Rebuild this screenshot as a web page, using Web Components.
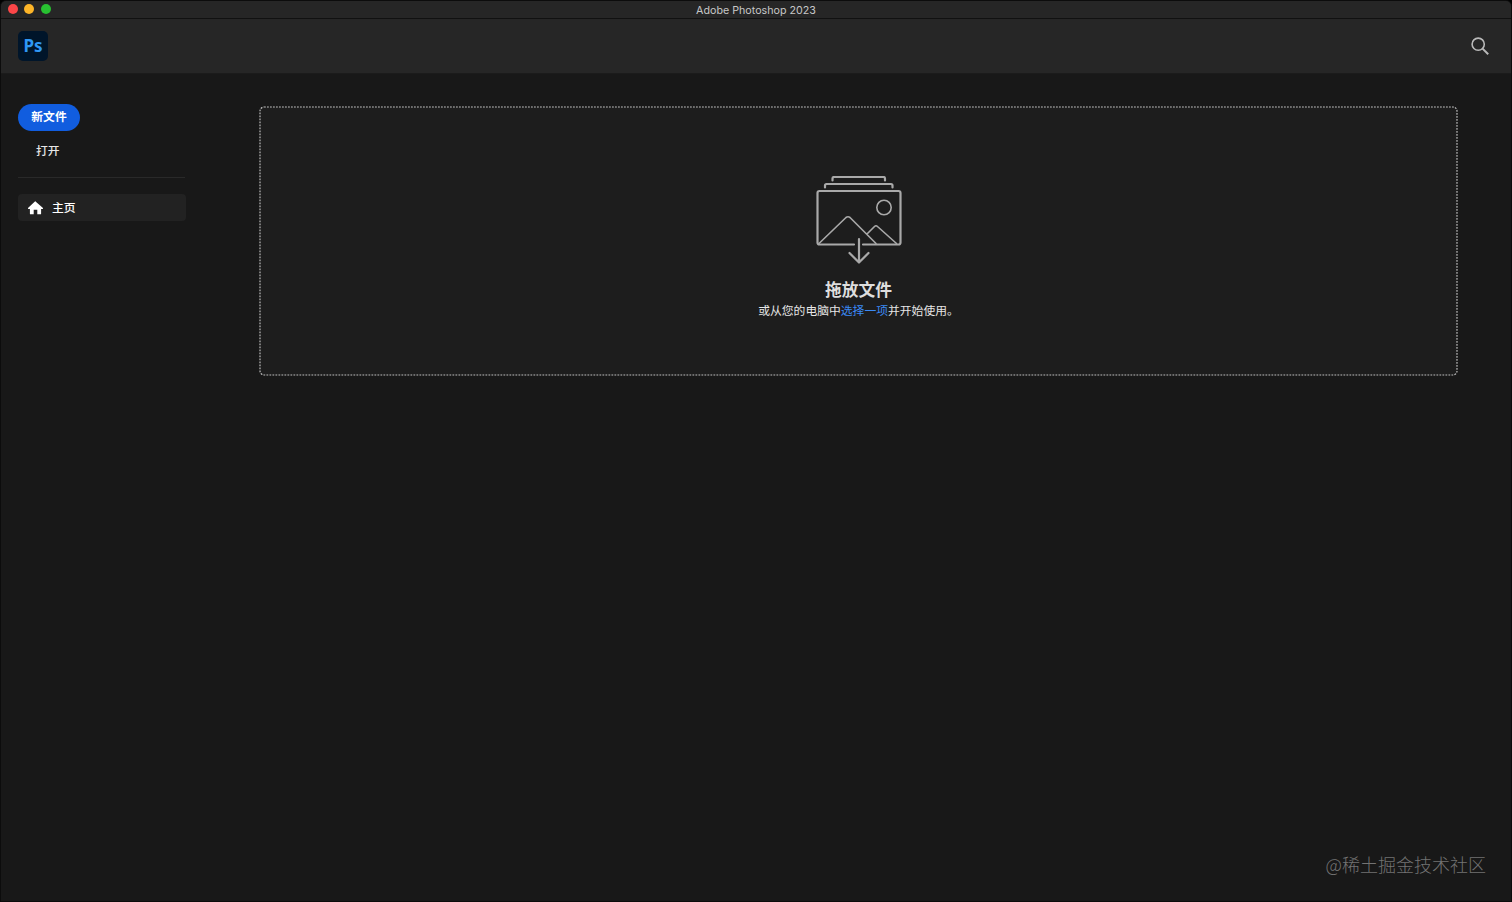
<!DOCTYPE html>
<html lang="zh-CN">
<head>
<meta charset="utf-8">
<title>Adobe Photoshop 2023</title>
<style>
    html, body {
        margin: 0;
        height: 100%;
        overflow: hidden;
        background: #000;
    }
</style>
</head>
<body>
<ps-window>
    <ps-titlebar slot="title">Adobe Photoshop 2023</ps-titlebar>
    <ps-header slot="header"></ps-header>
    <ps-sidebar slot="side"></ps-sidebar>
    <ps-dropzone></ps-dropzone>
    <ps-watermark slot="mark">@稀土掘金技术社区</ps-watermark>
</ps-window>

<script>
    const define = (name, markup) => {
        customElements.define(name, class extends HTMLElement {
            constructor() {
                super();
                this.attachShadow({ mode: 'open' }).innerHTML = markup;
            }
        });
    };

    define('ps-window', `
        <style>
            :host {
                display: flex;
                flex-direction: column;
                box-sizing: border-box;
                height: 100vh;
                border: 1px solid #0c0c0c;
                border-radius: 6px 6px 0 0;
                overflow: hidden;
                background: #181818;
                color: #e6e6e6;
                font-family: Inter, "Noto Sans CJK SC", sans-serif;
            }
            .body {
                flex: 1;
                display: flex;
                align-items: flex-start;
            }
            .main {
                flex: 1;
                padding: 32px 53px 0 73px;
            }
        </style>
        <slot name="title"></slot>
        <slot name="header"></slot>
        <div class="body">
            <slot name="side"></slot>
            <div class="main"><slot></slot></div>
        </div>
        <slot name="mark"></slot>
    `);

    define('ps-titlebar', `
        <style>
            :host {
                display: grid;
                grid-template-columns: 1fr auto 1fr;
                height: 17px;
                border-bottom: 1px solid #111;
                background: #262626;
                color: #c6c6c6;
                font-size: 10.7px;
                line-height: 17px;
            }
            .lights {
                display: flex;
                gap: 6.8px;
                padding: 3.4px 0 0 6.6px;
            }
            i {
                width: 10px;
                height: 10px;
                border-radius: 50%;
            }
            .title { padding-top: 1px; }
        </style>
        <div class="lights">
            <i style="background:#fc4648"></i>
            <i style="background:#fdb528"></i>
            <i style="background:#28c131"></i>
        </div>
        <div class="title"><slot></slot></div>
    `);

    define('ps-header', `
        <style>
            :host {
                display: flex;
                align-items: center;
                justify-content: space-between;
                height: 54px;
                padding: 0 22.5px 0 17px;
                background: #262626;
                border-bottom: 1px solid #1b1b1b;
            }
            .logo {
                width: 30px;
                height: 30px;
                border-radius: 5px;
                background: #00152a;
                color: #2f97f5;
                text-align: center;
                font: 700 17px/29px "Noto Sans", sans-serif;
            }
            svg { display: block; }
        </style>
        <div class="logo">Ps</div>
        <svg width="18" height="18" viewBox="0 0 18 18" fill="none" stroke="#b9b9b9" stroke-width="1.6">
            <circle cx="7.200" cy="7.200" r="6.100"/>
            <path d="M11.600 11.600 17.200 17.200" stroke-width="2"/>
        </svg>
    `);

    define('ps-sidebar', `
        <style>
            :host {
                display: block;
                box-sizing: border-box;
                width: 185px;
                padding: 30px 0 0 17px;
                font-size: 11.8px;
            }
            .new {
                width: 62px;
                height: 27px;
                border-radius: 14px;
                background: #115ddf;
                color: #fff;
                text-align: center;
                font-weight: 700;
                line-height: 27px;
            }
            .open {
                margin-top: 7px;
                padding-left: 18px;
                font-weight: 500;
                line-height: 27px;
            }
            .line {
                margin: 12px 1px 16px 0;
                height: 1px;
                background: #292929;
            }
            .home {
                display: flex;
                align-items: center;
                gap: 9px;
                height: 27px;
                padding-left: 10px;
                border-radius: 4px;
                background: #222;
                color: #fff;
                font-weight: 500;
                line-height: 28px;
            }
        </style>
        <div class="new">新文件</div>
        <div class="open">打开</div>
        <div class="line"></div>
        <div class="home">
            <svg width="15" height="14" viewBox="0 0 15 14" fill="#fff">
                <path d="M7.5.4 15 7.1q.1.9-.8.9h-1.1v4.7q0 .6-.6.6H9.3V8.8H5.7v4.5H2.5q-.6 0-.6-.6V8H.8Q-.1 8 0 7.1L6.9.6q.6-.5 1.2 0Z"/>
            </svg>
            <span>主页</span>
        </div>
    `);

    define('ps-dropzone', `
        <style>
            :host {
                display: grid;
                height: 270px;
            }
            /* frame and content share one cell */
            .frame, .content { grid-area: 1 / 1; }
            .frame {
                width: 100%;
                height: 270px;
            }
            .frame rect {
                width: calc(100% - 2px);
                height: calc(100% - 2px);
            }
            .content {
                display: flex;
                flex-direction: column;
                align-items: center;
                padding-top: 70px;
            }
            h2 {
                margin: 14px 0 0;
                color: #dedede;
                font-size: 16.8px;
                font-weight: 700;
                line-height: 24px;
            }
            p {
                margin: 0;
                font-size: 11.8px;
                line-height: 18px;
            }
            a { color: #3b8af5; }
        </style>
        <svg class="frame">
            <rect x="1" y="1" rx="4" fill="#1d1d1d" stroke="#bdbdbd" stroke-width="1.2" stroke-dasharray="1.8 1.2"/>
        </svg>
        <div class="content">
            <svg width="86" height="88" viewBox="0 0 86 88" fill="none" stroke="#a9a9a9" stroke-width="2.2" stroke-linecap="round" stroke-linejoin="round">
                <path d="M16.500 4.500V2.500q0-1.500 1.500-1.500H67.500q1.500 0 1.500 1.500V4.500"/>
                <path d="M9 11.500V9.500q0-1.500 1.500-1.500H75q1.500 0 1.500 1.500V11.500"/>
                <path d="M38 68.500H3.500q-2 0-2-2V17q0-2 2-2H82.500q2 0 2 2V66.500q0 2-2 2H47"/>
                <path d="M3 67.500 30 41.500q2-1.500 4 0L60 67.500M51 58l7.500-7.500q1.500-1.500 3 0L80.500 67.500" stroke-width="1.600"/>
                <circle cx="68" cy="31.500" r="7.200" stroke-width="1.600"/>
                <path d="M43 63V86M33.500 77 43 86.500 52.500 77"/>
            </svg>
            <h2>拖放文件</h2>
            <p>或从您的电脑中<a>选择一项</a>并开始使用。</p>
        </div>
    `);

    define('ps-watermark', `
        <style>
            :host {
                display: block;
                padding: 0 25px 23px 0;
                color: #737373;
                text-align: right;
                font: 300 18px/28px "Noto Sans CJK SC", sans-serif;
            }
        </style>
        <slot></slot>
    `);
</script>
</body>
</html>
